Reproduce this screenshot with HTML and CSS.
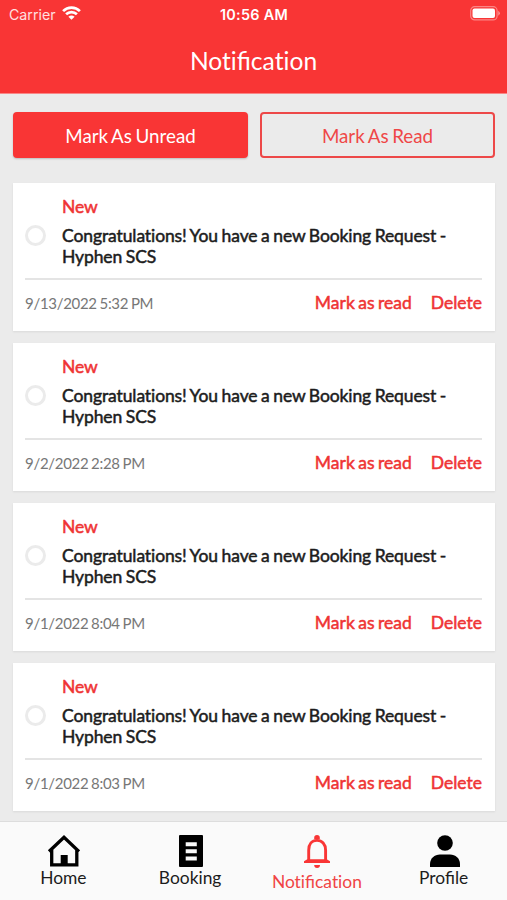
FILE: index.html
```html
<!DOCTYPE html>
<html lang="en">
<head>
<meta charset="utf-8">
<title>Notification</title>
<link rel="stylesheet" href="styles.css">
</head>
<body>
<div class="app">
  <header class="header">
    <div class="status">
      <div class="carrier"><span>Carrier</span>
        <svg class="wifi" width="19" height="14" viewBox="0 0 19 14" fill="none" stroke="#fff" stroke-width="2.7"><path d="M1.1 5.1C5.8.4 13.2.4 17.9 5.1"/><path d="M4.1 8.3C7.1 5.4 11.9 5.4 14.9 8.3"/><path d="M6.4 10.7Q9.5 8.2 12.6 10.7L9.5 13.8Z" fill="#fff" stroke="none"/></svg>
      </div>
      <span class="time">10:56 AM</span>
      <svg class="battery" width="31" height="15" viewBox="0 0 31 15"><rect x=".7" y=".7" width="26.4" height="13.2" rx="4" fill="none" stroke="#fff" stroke-opacity=".4" stroke-width="1.2"/><rect x="2.5" y="2.5" width="22.5" height="9.5" rx="2" fill="#fff"/><path d="M28.3 4.8q3 2.5 0 5z" fill="#fff" fill-opacity=".5"/></svg>
    </div>
    <h1 class="title"><span class="solo">Not</span>ifica<span class="solo">t</span>ion</h1>
  </header>
  <main class="content">
    <div class="actions">
      <button class="btn filled">Mark As Unread</button>
      <button class="btn outlined">Mark As Read</button>
    </div>
    <div class="list">
      <article class="card">
        <div class="message"><span class="radio"></span><div><div class="new">New</div><p class="text">Congratulations! You have a new Booking Request -<br>Hyphen SCS</p></div></div>
        <div class="meta"><time class="date">9/13/2022 5:32 PM</time><a class="link mark">Mark as read</a><a class="link delete">Delete</a></div>
      </article>
      <article class="card">
        <div class="message"><span class="radio"></span><div><div class="new">New</div><p class="text">Congratulations! You have a new Booking Request -<br>Hyphen SCS</p></div></div>
        <div class="meta"><time class="date">9/2/2022 2:28 PM</time><a class="link mark">Mark as read</a><a class="link delete">Delete</a></div>
      </article>
      <article class="card">
        <div class="message"><span class="radio"></span><div><div class="new">New</div><p class="text">Congratulations! You have a new Booking Request -<br>Hyphen SCS</p></div></div>
        <div class="meta"><time class="date">9/1/2022 8:04 PM</time><a class="link mark">Mark as read</a><a class="link delete">Delete</a></div>
      </article>
      <article class="card">
        <div class="message"><span class="radio"></span><div><div class="new">New</div><p class="text">Congratulations! You have a new Booking Request -<br>Hyphen SCS</p></div></div>
        <div class="meta"><time class="date">9/1/2022 8:03 PM</time><a class="link mark">Mark as read</a><a class="link delete">Delete</a></div>
      </article>
    </div>
  </main>
  <nav class="tabs">
    <a class="tab"><svg width="34" height="34" viewBox="0 0 34 34"><path d="M3 17.500 18 3.200 33 17.500M5.700 15.500V30.800H30.800V15.500" fill="none" stroke="#000" stroke-width="3.3"/><path d="M14.700 21h7v10h-7z"/></svg><span class="label">Home</span></a>
    <a class="tab"><svg width="34" height="34" viewBox="0 0 34 34"><path fill-rule="evenodd" d="M7 1h22a1 1 0 0 1 1 1v30a1 1 0 0 1-1 1H7a1 1 0 0 1-1-1V2a1 1 0 0 1 1-1zM12.700 8.300v3.900h11.100V8.300zM12.700 15.300v3.900h11.100v-3.900zM12.700 22.500v3.900h11.100v-3.900z"/></svg><span class="label">Booking</span></a>
    <a class="tab active"><svg width="34" height="34" viewBox="0 0 34 34" fill="#f93535"><path d="M8.700 27V16.200C8.700 10.200 12 6.400 17 6.400s8.600 3.800 8.600 9.800V27" fill="none" stroke="#f93535" stroke-width="2.9"/><path d="M14.200 5.300V3.800a2.800 2.800 0 0 1 5.600 0v1.500zM4 29v-1.800l3.300-2h19.400l3.300 2V29zM14.200 31h5.800a2.900 2.900 0 0 1-5.800 0z"/></svg><span class="label"><span class="solo">Not</span>ifica<span class="solo">t</span>ion</span></a>
    <a class="tab"><svg width="34" height="34" viewBox="0 0 34 34"><circle cx="18" cy="9" r="7.800"/><path d="M3 33v-3C3 24.200 7.500 20.400 13 20.400h10c5.500 0 10 3.800 10 9.600v3z"/></svg><span class="label">Profile</span></a>
  </nav>
</div>
</body>
</html>
```
FILE: styles.css
```css
* { box-sizing: border-box; }
body { margin: 0; font-family: Lato, sans-serif; color: #1c1c1c; }
.app { width: 507px; height: 900px; display: flex; flex-direction: column; background: #ebebeb; overflow: hidden; }
.header { height: 94px; background: #f93535; color: #fff; border-bottom: 1px solid #f98787; flex: none; }
.status { height: 28px; display: grid; grid-template-columns: 1fr auto 1fr; align-items: center; padding: 0 6px 0 9px; font-family: Inter, sans-serif; }
.carrier { display: flex; align-items: center; gap: 6px; font-size: 14.2px; letter-spacing: 0; color: #ffe0e0; }
.wifi { margin-top: -3px; }
.time { font-size: 14.4px; font-weight: 600; letter-spacing: .3px; margin-right: 2px; }
.battery { justify-self: end; margin-top: -2px; }
.title { margin: 0; text-align: center; font-size: 24.6px; line-height: 30px; font-weight: 400; padding-top: 18px; }
/* Keeps "ti" from joining while "fi" still does. */
.solo { letter-spacing: -.02px; }
.content { flex: 1; padding: 18px 12px 0 13px; }
.actions { display: grid; grid-template-columns: 1fr 1fr; gap: 12px; }
.btn { height: 46px; padding: 1px 0 0; border-radius: 4px; border: 2px solid #f93535; font: 400 18.8px Lato, sans-serif; word-spacing: -1.2px; }
.filled { background: #f93535; color: #fff; box-shadow: 0 1px 2px rgba(0,0,0,.2); }
.outlined { background: transparent; color: #ef4747; border-color: #ed4848; }
.list { display: flex; flex-direction: column; gap: 12px; margin-top: 25px; }
.card { height: 148px; background: #fff; padding: 13px 13px 0 12px; box-shadow: 0 1px 2px rgba(0,0,0,.08); }
.message { height: 84px; display: flex; align-items: center; gap: 16px; border-bottom: 2px solid #e4e4e4; }
.radio { width: 21px; height: 21px; border: 3px solid #ebebeb; border-radius: 50%; flex: none; margin-top: -4px; }
.message > div { align-self: flex-start; }
.new, .text, .link { font-size: 17.5px; -webkit-text-stroke: .5px; }
.new { height: 21px; line-height: 21px; color: #ef3434; letter-spacing: -.1px; }
.text { margin: 8px 0 0; line-height: 21px; white-space: nowrap; letter-spacing: -.1px; word-spacing: -.8px; }
.meta { display: flex; align-items: center; height: 46px; padding-bottom: 1px; }
.date { flex: 1; font-size: 15px; color: #777; letter-spacing: -.3px; word-spacing: -.8px; }
.link { color: #ef3434; word-spacing: -1px; }
.delete { margin-left: 19px; }
.tabs { height: 79px; flex: none; display: grid; grid-template-columns: repeat(4, 1fr); background: #fafafa; border-top: 1px solid #ddd; }
.tab { display: flex; flex-direction: column; align-items: center; padding-top: 12px; font-size: 17.4px; line-height: 22px; }
.tab svg { width: 34px; height: 34px; }
.label { margin-top: -1px; }
.active { color: #f04444; }
.active .label { margin-top: 3px; }
```
